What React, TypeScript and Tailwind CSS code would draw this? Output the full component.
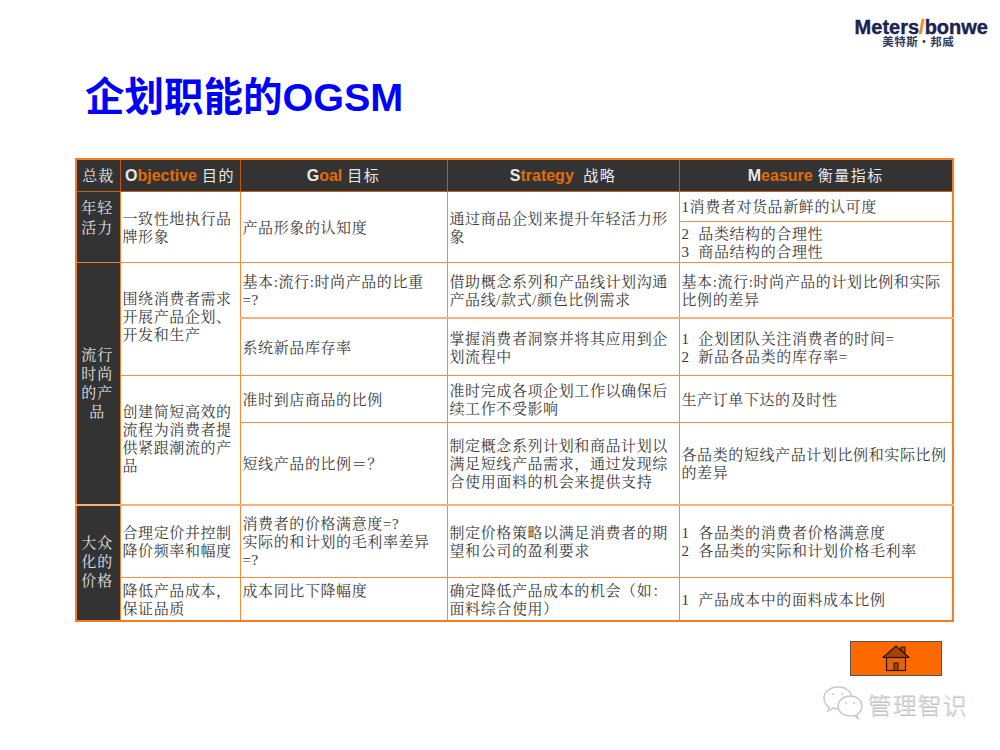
const font = "font-['Liberation_Serif','Noto_Serif_CJK_SC','Noto_Sans_CJK_SC',serif]";

const colWidths = [44, 120, 207, 232, 274];

function Head({ first, rest, label }: { first: string; rest: string; label: string }) {
  return (
    <th className="border border-[#c85a0a] bg-[#333333] p-0 pt-[2px] text-center text-[16px] font-bold text-[#e8e8e8]">
      <span className="font-['Liberation_Sans',sans-serif]">{first}</span>
      <span className="font-['Liberation_Sans',sans-serif] text-[#e36c09]">{rest}</span>
      <span className="ml-[5px] text-[15px] font-normal tracking-[1.5px] font-['Noto_Sans_CJK_SC',sans-serif]">{label}</span>
    </th>
  );
}

function Side({ rows, children }: { rows: number; children: React.ReactNode }) {
  return (
    <td rowSpan={rows} className="border border-[#f0802a] bg-[#333333] p-0 pr-[2px] text-center align-middle text-[15px] leading-[19px] tracking-[1px] text-[#e0e0e0]">
      {children}
    </td>
  );
}

function Cell({ children, rows }: { children: React.ReactNode; rows?: number }) {
  return (
    <td rowSpan={rows} className="border border-[#f98b3e] px-[2px] pb-0 pt-[2px] align-middle text-[15px] leading-[18px] tracking-[0.6px] text-[#3a3a3a]">
      {children}
    </td>
  );
}

export default function App() {
  return (
    <div className={`flex h-[750px] w-[1000px] flex-col bg-white ${font}`}>
      <div className="flex h-[158px] items-start justify-between pl-[85px]">
        <h1 className="mt-[70px] font-['Liberation_Sans','Noto_Sans_CJK_SC',sans-serif] text-[39.5px] font-bold leading-[54px] text-[#0000ff]">企划职能的OGSM</h1>
        <div className="mr-[12px] mt-[19px] flex flex-col items-center">
          <div className="font-['Liberation_Sans',sans-serif] text-[20px] font-bold leading-[17px] text-[#1c2350] [-webkit-text-stroke:0.4px_#1c2350]">
            Meters<span className="text-[#f08a1d] [-webkit-text-stroke:0.4px_#f08a1d]">/</span>bonwe
          </div>
          <div className="mr-[6px] font-['Noto_Sans_CJK_SC',sans-serif] text-[11.5px] font-bold leading-[10px] tracking-[0.5px] text-[#333a5c]">美特斯·邦威</div>
        </div>
      </div>

      <table className="ml-[75px] w-[877px] table-fixed border-collapse border-2 border-[#f97c20]">
        <colgroup>
          {colWidths.map((w) => (
            <col key={w} style={{ width: w }} />
          ))}
        </colgroup>
        <tbody>
          <tr className="h-[32px]">
            <th className="border border-[#c85a0a] bg-[#333333] p-0 pt-[2px] text-center text-[15px] font-normal tracking-[1px] text-[#e8e8e8]">总裁</th>
            <Head first="O" rest="bjective" label="目的" />
            <Head first="G" rest="oal" label="目标" />
            <Head first="S" rest="trategy " label=" 战略" />
            <Head first="M" rest="easure" label="衡量指标" />
          </tr>
          <tr className="h-[30px]">
            <Side rows={2}><span className="relative -top-[9px] block leading-[20px]">年轻<br />活力</span></Side>
            <Cell rows={2}>一致性地执行品<br />牌形象</Cell>
            <Cell rows={2}>产品形象的认知度</Cell>
            <Cell rows={2}>通过商品企划来提升年轻活力形<br />象</Cell>
            <Cell>1消费者对货品新鲜的认可度</Cell>
          </tr>
          <tr className="h-[41px]">
            <Cell>2&nbsp; 品类结构的合理性<br />3&nbsp; 商品结构的合理性</Cell>
          </tr>
          <tr className="h-[56px]">
            <Side rows={4}><span className="relative top-[1px] block">流行<br />时尚<br />的产<br />品</span></Side>
            <Cell rows={2}><span className="relative -top-[3px] block">围绕消费者需求<br />开展产品企划、<br />开发和生产</span></Cell>
            <Cell>基本:流行:时尚产品的比重<br />=?</Cell>
            <Cell>借助概念系列和产品线计划沟通<br />产品线/款式/颜色比例需求</Cell>
            <Cell>基本:流行:时尚产品的计划比例和实际<br />比例的差异</Cell>
          </tr>
          <tr className="h-[57px] border-t-2 border-[#fbb07a]">
            <Cell>系统新品库存率</Cell>
            <Cell>掌握消费者洞察并将其应用到企<br />划流程中</Cell>
            <Cell>1&nbsp; 企划团队关注消费者的时间=<br />2&nbsp; 新品各品类的库存率=</Cell>
          </tr>
          <tr className="h-[47px]">
            <Cell rows={2}><span className="relative -top-[2px] block">创建简短高效的<br />流程为消费者提<br />供紧跟潮流的产<br />品</span></Cell>
            <Cell>准时到店商品的比例</Cell>
            <Cell>准时完成各项企划工作以确保后<br />续工作不受影响</Cell>
            <Cell>生产订单下达的及时性</Cell>
          </tr>
          <tr className="h-[83px]">
            <Cell>短线产品的比例＝？</Cell>
            <Cell>制定概念系列计划和商品计划以<br />满足短线产品需求，通过发现综<br />合使用面料的机会来提供支持</Cell>
            <Cell>各品类的短线产品计划比例和实际比例<br />的差异</Cell>
          </tr>
          <tr className="h-[72px] border-t-2 border-[#fbb07a]">
            <Side rows={2}><span className="relative -top-[1px] block">大众<br />化的<br />价格</span></Side>
            <Cell>合理定价并控制<br />降价频率和幅度</Cell>
            <Cell>消费者的价格满意度=?<br />实际的和计划的毛利率差异<br />=?</Cell>
            <Cell>制定价格策略以满足消费者的期<br />望和公司的盈利要求</Cell>
            <Cell>1&nbsp; 各品类的消费者价格满意度<br />2&nbsp; 各品类的实际和计划价格毛利率</Cell>
          </tr>
          <tr className="h-[44px]">
            <Cell>降低产品成本，<br />保证品质</Cell>
            <Cell><span className="relative -top-[9px] block">成本同比下降幅度</span></Cell>
            <Cell>确定降低产品成本的机会（如：<br />面料综合使用）</Cell>
            <Cell>1&nbsp; 产品成本中的面料成本比例</Cell>
          </tr>
        </tbody>
      </table>

      <div className="ml-[850px] mt-[19px] flex h-[35px] w-[92px] items-center justify-center border border-[#555555] bg-[#ff6a00]">
        <svg width="28" height="27" viewBox="0 0 28 27">
          <rect x="19" y="2" width="4" height="8" fill="#a34400" stroke="#2a1000" strokeWidth="1" />
          <path d="M1 12.5 14 1l13 11.5Z" fill="#a34400" stroke="#2a1000" strokeWidth="1.2" strokeLinejoin="round" />
          <rect x="4.5" y="12.5" width="19" height="13" fill="#e0650a" stroke="#2a1000" strokeWidth="1.2" />
          <rect x="12" y="18" width="4" height="7.5" fill="#a34400" stroke="#2a1000" strokeWidth="1" />
        </svg>
      </div>

      <div className="ml-[823px] mt-[10px] flex items-center gap-[4px]">
        <svg width="40" height="36" viewBox="0 0 40 36" fill="white" stroke="#c8c8c8" strokeWidth="1.4">
          <path d="M15 1C7 1 1 6 1 12c0 4 2 7 5 9l-1 4 5-3c2 .6 4 .8 6 .6C25 22 29 17 29 12 29 6 23 1 15 1Z" />
          <path d="M27 10c-7 0-12 4.500-12 10s5 10 12 10c1.500 0 3-.2 4-.6l4 3-1-4c3-2 5-5 5-8.400 0-5.500-5-10-12-10Z" />
          <circle cx="10" cy="8" r="1" fill="#c8c8c8" stroke="none" />
          <circle cx="19" cy="8" r="1" fill="#c8c8c8" stroke="none" />
          <circle cx="23" cy="17" r="1" fill="#c8c8c8" stroke="none" />
          <circle cx="31" cy="17" r="1" fill="#c8c8c8" stroke="none" />
        </svg>
        <span className="font-['Noto_Sans_CJK_SC',sans-serif] text-[24px] font-light leading-[30px] tracking-[1px] text-[#dcdcdc] [text-shadow:1px_1px_0_#c4c4c4]">管理智识</span>
      </div>
    </div>
  );
}
